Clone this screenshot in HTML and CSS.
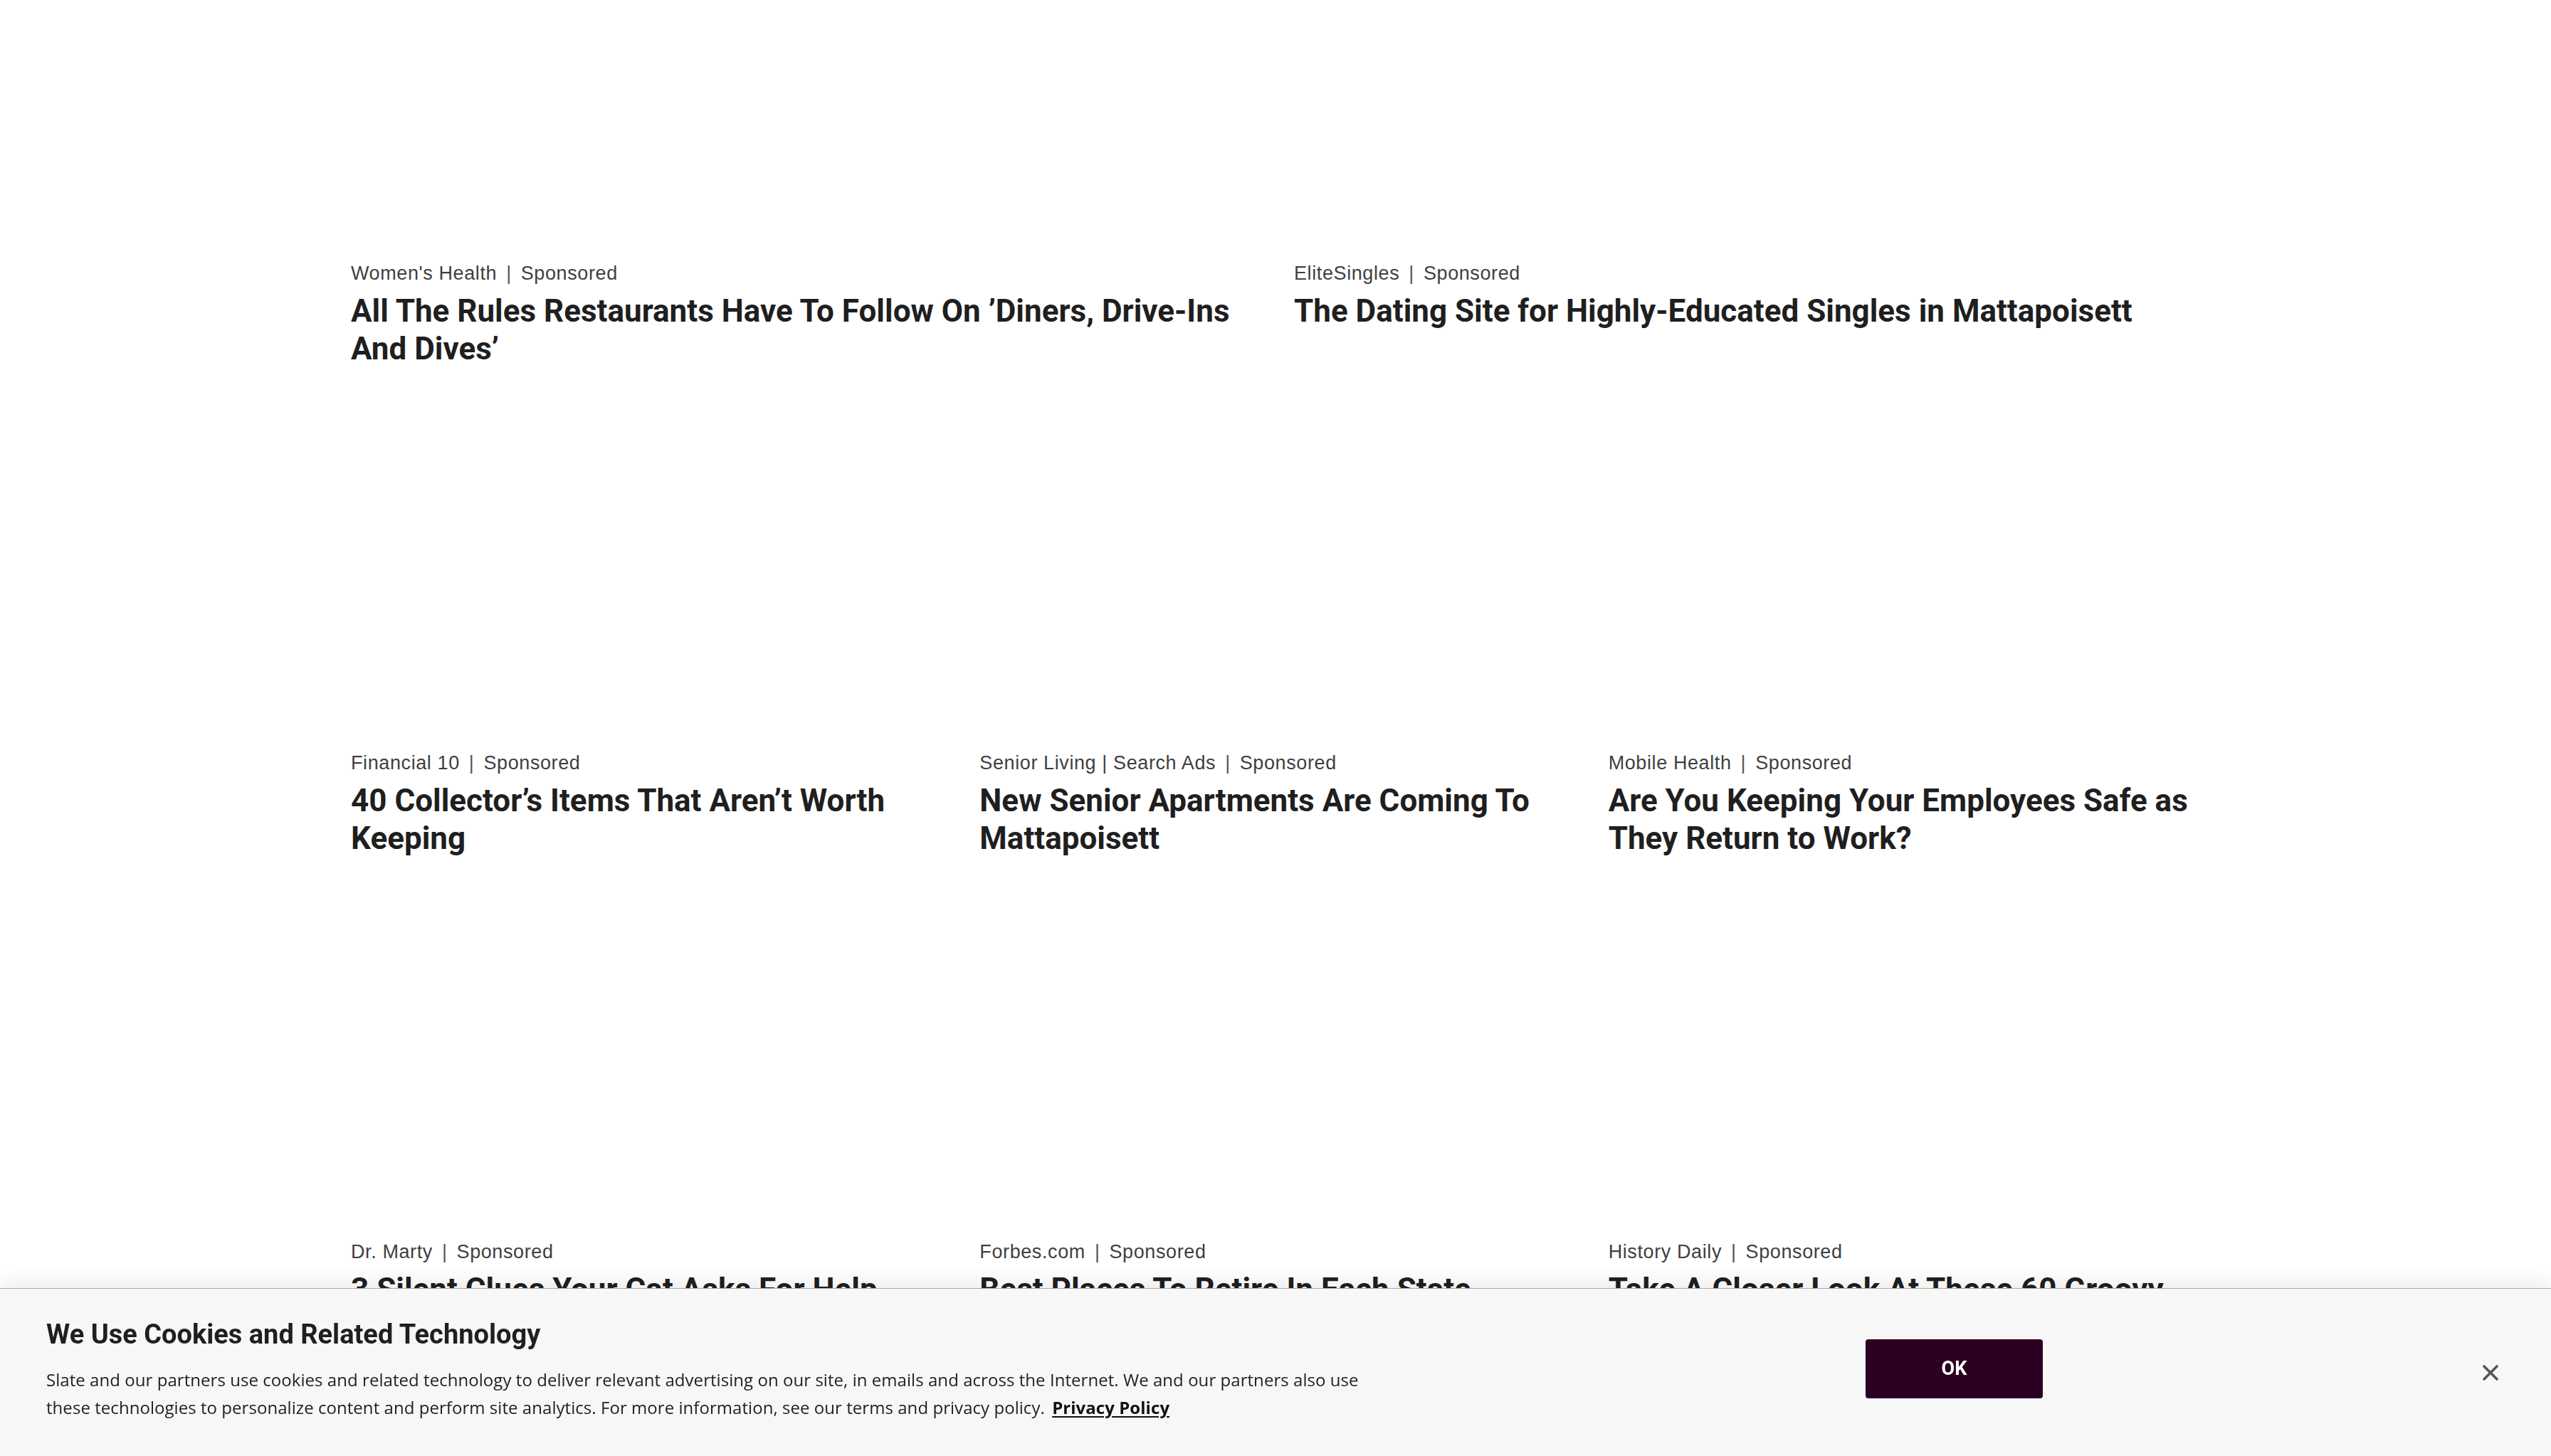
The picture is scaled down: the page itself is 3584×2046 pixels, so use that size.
FILE: index.html
```html
<!DOCTYPE html>
<html lang="en">
<head>
<meta charset="utf-8">
<title>Slate – Sponsored</title>
<link rel="stylesheet" href="styles.css">
</head>
<body>
<main class="feed">
  <section class="row row-2">
    <article class="card">
      <div class="thumb"></div>
      <p class="meta"><span class="src">Women's Health</span><span class="sep">|</span><span>Sponsored</span></p>
      <h3 class="title">All The Rules Restaurants Have To Follow On ’Diners, Drive-Ins And Dives’</h3>
    </article>
    <article class="card">
      <div class="thumb"></div>
      <p class="meta"><span class="src">EliteSingles</span><span class="sep">|</span><span>Sponsored</span></p>
      <h3 class="title">The Dating Site for Highly-Educated Singles in Mattapoisett</h3>
    </article>
  </section>
  <section class="row row-3">
    <article class="card">
      <div class="thumb"></div>
      <p class="meta"><span class="src">Financial 10</span><span class="sep">|</span><span>Sponsored</span></p>
      <h3 class="title">40 Collector’s Items That Aren’t Worth Keeping</h3>
    </article>
    <article class="card">
      <div class="thumb"></div>
      <p class="meta"><span class="src">Senior Living | Search Ads</span><span class="sep">|</span><span>Sponsored</span></p>
      <h3 class="title">New Senior Apartments Are Coming To Mattapoisett</h3>
    </article>
    <article class="card">
      <div class="thumb"></div>
      <p class="meta"><span class="src">Mobile Health</span><span class="sep">|</span><span>Sponsored</span></p>
      <h3 class="title">Are You Keeping Your Employees Safe as They Return to Work?</h3>
    </article>
  </section>
  <section class="row row-3">
    <article class="card">
      <div class="thumb"></div>
      <p class="meta"><span class="src">Dr. Marty</span><span class="sep">|</span><span>Sponsored</span></p>
      <h3 class="title">3 Silent Clues Your Cat Asks For Help</h3>
    </article>
    <article class="card">
      <div class="thumb"></div>
      <p class="meta"><span class="src">Forbes.com</span><span class="sep">|</span><span>Sponsored</span></p>
      <h3 class="title">Best Places To Retire In Each State</h3>
    </article>
    <article class="card">
      <div class="thumb"></div>
      <p class="meta"><span class="src">History Daily</span><span class="sep">|</span><span>Sponsored</span></p>
      <h3 class="title">Take A Closer Look At These 60 Groovy Photos From The 1960s</h3>
    </article>
  </section>
</main>

<aside class="consent">
  <div class="consent-text">
    <h2 class="consent-title">We Use Cookies and Related Technology</h2>
    <p class="consent-body">Slate and our partners use cookies and related technology to deliver relevant advertising on our site, in emails and across the Internet. We and our partners also use these technologies to personalize content and perform site analytics. For more information, see our terms and privacy policy. <a class="consent-link" href="#">Privacy Policy</a></p>
  </div>
  <button class="consent-ok" type="button">OK</button>
  <button class="consent-close" type="button" aria-label="Close">
    <svg viewBox="0 0 24 24" width="24" height="24"><path d="M3 3 L21 21 M21 3 L3 21" stroke="#555" stroke-width="3.6" stroke-linecap="round" fill="none"/></svg>
  </button>
</aside>
</body>
</html>
```

FILE: styles.css
```css
html, body {
  margin: 0;
  padding: 0;
  background: #ffffff;
  overflow: hidden;
}

body {
  font-family: "Liberation Sans", Arial, sans-serif;
  color: #222;
}

.feed {
  width: 2598px;
  margin: -372px auto 0;
}

.row {
  display: grid;
  column-gap: 52px;
  margin-bottom: 47px;
}

.row-2 { grid-template-columns: repeat(2, 1fr); }
.row-3 { grid-template-columns: repeat(3, 1fr); }

.card {
  display: flex;
  flex-direction: column;
}

.thumb {
  aspect-ratio: 16 / 9;
  background: #ffffff;
}

.meta {
  margin: 25px 0 0;
  font-family: "Liberation Sans", Arial, sans-serif;
  font-size: 27px;
  letter-spacing: 0.6px;
  line-height: 30px;
  color: #404040;
}

.sep {
  margin: 0 13px;
  color: #555;
}

.title {
  margin: 12px 0 0;
  font-family: Roboto, "Open Sans", sans-serif;
  font-weight: 700;
  font-size: 44px;
  line-height: 53px;
  color: #1f1f1f;
  letter-spacing: 0;
}

.consent {
  position: fixed;
  left: 0;
  right: 0;
  bottom: 0;
  height: 236px;
  box-sizing: border-box;
  background: #f7f7f7;
  border-top: 1px solid #a8a8a8;
  box-shadow: 0 -10px 28px rgba(0, 0, 0, 0.07);
  display: flex;
  align-items: center;
  padding: 0 73px 0 65px;
}

.consent-text {
  flex: 1;
  align-self: flex-start;
  padding-top: 41px;
}

.consent-title {
  margin: 0;
  font-family: Roboto, "Open Sans", sans-serif;
  font-weight: 700;
  font-size: 38px;
  line-height: 46px;
  color: #1f1f1f;
  letter-spacing: 0;
}

.consent-body {
  margin: 21px 0 0;
  max-width: 1880px;
  font-family: "Open Sans", "Noto Sans", sans-serif;
  font-size: 24px;
  letter-spacing: 0.05px;
  line-height: 39px;
  color: #222;
}

.consent-link {
  color: #111;
  font-weight: 700;
  text-decoration: underline;
  text-underline-offset: 3px;
  margin-left: 4px;
}

.consent-ok {
  width: 249px;
  height: 83px;
  margin-bottom: 11px;
  border: none;
  border-radius: 4px;
  background: #2c0021;
  color: #fff;
  font-family: Roboto, "Open Sans", sans-serif;
  font-weight: 700;
  font-size: 27px;
  cursor: pointer;
}

.consent-close {
  margin-left: 617px;
  width: 24px;
  height: 24px;
  padding: 0;
  border: none;
  background: transparent;
  display: flex;
  align-items: center;
  justify-content: center;
  cursor: pointer;
}

.consent-close svg {
  display: block;
}
```
